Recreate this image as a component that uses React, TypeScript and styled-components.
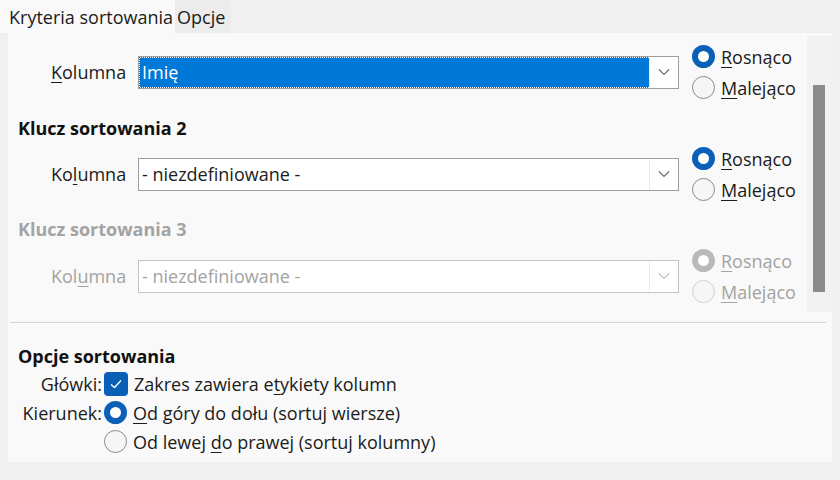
import React from "react";
import styled, { createGlobalStyle } from "styled-components";

const Global = createGlobalStyle`
  html, body { margin: 0; padding: 0; }
  body {
    background: #f0f0f0;
    font-family: "Open Sans", "Noto Sans", "Liberation Sans", sans-serif;
    color: #1b1b1b;
  }
`;

const BLUE = "#0a5fb6";
const FS = "18px";

const Window = styled.div`
  width: 840px;
  height: 480px;
  display: flex;
  flex-direction: column;
  background: #f0f0f0;
  overflow: hidden;
`;

const TabBar = styled.div`
  height: 33px;
  display: flex;
  align-items: stretch;
`;

const Tab = styled.div<{ $active?: boolean }>`
  display: flex;
  align-items: center;
  padding: 0 ${(p) => (p.$active ? "2px" : "6px")} 0 ${(p) => (p.$active ? "9px" : "2px")};
  font-size: ${FS};
  background: ${(p) => (p.$active ? "#f9f9f9" : "#ececec")};
  color: #1b1b1b;
`;

const Panel = styled.div`
  margin: 0 8px;
  height: 429px;
  background: #f9f9f9;
  display: flex;
  flex-direction: column;
`;

const ScrollArea = styled.div`
  height: 289px;
  display: flex;
`;

const ScrollContent = styled.div`
  flex: 1;
  padding: 8px 0 0 0;
  display: flex;
  flex-direction: column;
`;

const ScrollTrack = styled.div`
  width: 25px;
  margin: 3px 0 10px;
  background: #f2f2f2;
  position: relative;
`;

const Thumb = styled.div`
  position: absolute;
  left: 6px;
  top: 49px;
  width: 12px;
  height: 207px;
  background: #8b8b8b;
`;

const Heading = styled.div<{ $disabled?: boolean; $mt?: number }>`
  height: 26px;
  margin-top: ${(p) => p.$mt ?? 0}px;
  display: flex;
  align-items: center;
  padding-left: 10px;
  font-size: ${FS};
  font-weight: 700;
  color: ${(p) => (p.$disabled ? "#a3a3a3" : "#111")};
`;

const KeyRow = styled.div<{ $mt?: number }>`
  height: 62px;
  margin-top: ${(p) => p.$mt ?? 0}px;
  display: flex;
  align-items: center;
`;

const FieldLabel = styled.div<{ $disabled?: boolean }>`
  width: 118px;
  padding-left: 43px;
  box-sizing: border-box;
  font-size: ${FS};
  white-space: nowrap;
  color: ${(p) => (p.$disabled ? "#a3a3a3" : "#1b1b1b")};
  margin-right: 12px;
`;

const Combo = styled.div<{ $disabled?: boolean }>`
  width: 541px;
  height: 33px;
  box-sizing: border-box;
  border: 1px solid ${(p) => (p.$disabled ? "#c4c4c4" : "#9e9e9e")};
  background: #fff;
  display: flex;
  align-items: stretch;
`;

const ComboText = styled.div<{ $selected?: boolean; $disabled?: boolean }>`
  flex: 1;
  margin: 1px 0 1px 1px;
  padding-left: 2px;
  display: flex;
  align-items: center;
  font-size: ${FS};
  color: ${(p) => (p.$selected ? "#fff" : p.$disabled ? "#a3a3a3" : "#1b1b1b")};
  background: ${(p) => (p.$selected ? "#0078d7" : "transparent")};
  outline: ${(p) => (p.$selected ? "1px dotted #555" : "none")};
`;

const ComboButton = styled.div`
  width: 28px;
  border-left: 1px solid #ececec;
  display: flex;
  align-items: center;
  justify-content: center;
`;

const RadioGroup = styled.div`
  margin-left: 13px;
  display: flex;
  flex-direction: column;
`;

const OptionRow = styled.div`
  height: 31px;
  display: flex;
  align-items: center;
  gap: 6px;
`;

const OptionText = styled.span<{ $disabled?: boolean }>`
  font-size: ${FS};
  color: ${(p) => (p.$disabled ? "#a3a3a3" : "#1b1b1b")};
  white-space: nowrap;
`;

const RadioCircle = styled.span<{ $checked?: boolean; $disabled?: boolean }>`
  width: 23px;
  height: 23px;
  box-sizing: border-box;
  border-radius: 50%;
  flex: none;
  ${(p) =>
    p.$checked
      ? `border: 6px solid ${p.$disabled ? "#b9b9b9" : BLUE}; background: #fff;`
      : `border: 1px solid ${p.$disabled ? "#cfcfcf" : "#8a8a8a"}; background: #f6f6f6;`}
`;

const Check = styled.span`
  width: 24px;
  height: 24px;
  border-radius: 4px;
  background: ${BLUE};
  display: flex;
  align-items: center;
  justify-content: center;
  flex: none;
`;

const Separator = styled.div`
  height: 1px;
  background: #d6d6d6;
  margin: 0 6px 0 2px;
`;

const OptionsSection = styled.div`
  padding-top: 20px;
  display: flex;
  flex-direction: column;
`;

const OptGrid = styled.div`
  display: grid;
  grid-template-columns: 94px auto;
  grid-auto-rows: 29px;
  column-gap: 2px;
  align-items: center;
`;

const OptLabel = styled.div`
  font-size: ${FS};
  text-align: right;
  white-space: nowrap;
  color: #1b1b1b;
`;

const U = styled.span`
  text-decoration: underline;
  text-underline-offset: 3px;
`;

const Chevron = ({ disabled }: { disabled?: boolean }) => (
  <svg width="12" height="8" viewBox="0 0 12 8">
    <path d="M1 1.5 L6 6.5 L11 1.5" fill="none" stroke={disabled ? "#c2c2c2" : "#6b6b6b"} strokeWidth="1.1" />
  </svg>
);

const Radio = ({
  checked,
  disabled,
  children,
}: {
  checked?: boolean;
  disabled?: boolean;
  children: React.ReactNode;
}) => (
  <OptionRow>
    <RadioCircle $checked={checked} $disabled={disabled} />
    <OptionText $disabled={disabled}>{children}</OptionText>
  </OptionRow>
);

const KeyLine = ({
  label,
  value,
  selected,
  disabled,
  mt,
}: {
  label: React.ReactNode;
  value: string;
  selected?: boolean;
  disabled?: boolean;
  mt?: number;
}) => (
  <KeyRow $mt={mt}>
    <FieldLabel $disabled={disabled}>{label}</FieldLabel>
    <Combo $disabled={disabled}>
      <ComboText $selected={selected} $disabled={disabled}>
        {value}
      </ComboText>
      <ComboButton>
        <Chevron disabled={disabled} />
      </ComboButton>
    </Combo>
    <RadioGroup>
      <Radio checked disabled={disabled}>
        <U>R</U>osnąco
      </Radio>
      <Radio disabled={disabled}>
        <U>M</U>alejąco
      </Radio>
    </RadioGroup>
  </KeyRow>
);

export default function App() {
  return (
    <Window>
      <Global />
      <TabBar>
        <Tab $active>Kryteria sortowania</Tab>
        <Tab>Opcje</Tab>
      </TabBar>
      <Panel>
        <ScrollArea>
          <ScrollContent>
            <KeyLine
              label={
                <>
                  <U>K</U>olumna
                </>
              }
              value="Imię"
              selected
            />
            <Heading $mt={12}>Klucz sortowania 2</Heading>
            <KeyLine
              mt={2}
              label={
                <>
                  Ko<U>l</U>umna
                </>
              }
              value="- niezdefiniowane -"
            />
            <Heading $disabled $mt={11}>
              Klucz sortowania 3
            </Heading>
            <KeyLine
              mt={3}
              disabled
              label={
                <>
                  Kol<U>u</U>mna
                </>
              }
              value="- niezdefiniowane -"
            />
          </ScrollContent>
          <ScrollTrack>
            <Thumb />
          </ScrollTrack>
        </ScrollArea>
        <Separator />
        <OptionsSection>
          <Heading>Opcje sortowania</Heading>
          <OptGrid>
            <OptLabel>Główki:</OptLabel>
            <OptionRow>
              <Check>
                <svg width="14" height="12" viewBox="0 0 14 12">
                  <path d="M2 6.5 L5.5 9.5 L12 2.5" fill="none" stroke="#fff" strokeWidth="1.3" />
                </svg>
              </Check>
              <OptionText>
                Zakres zawiera e<U>t</U>ykiety kolumn
              </OptionText>
            </OptionRow>
            <OptLabel>Kierunek:</OptLabel>
            <Radio checked>
              <U>O</U>d góry do dołu (sortuj wiersze)
            </Radio>
            <span />
            <Radio>
              Od lewej <U>d</U>o prawej (sortuj kolumny)
            </Radio>
          </OptGrid>
        </OptionsSection>
      </Panel>
    </Window>
  );
}
